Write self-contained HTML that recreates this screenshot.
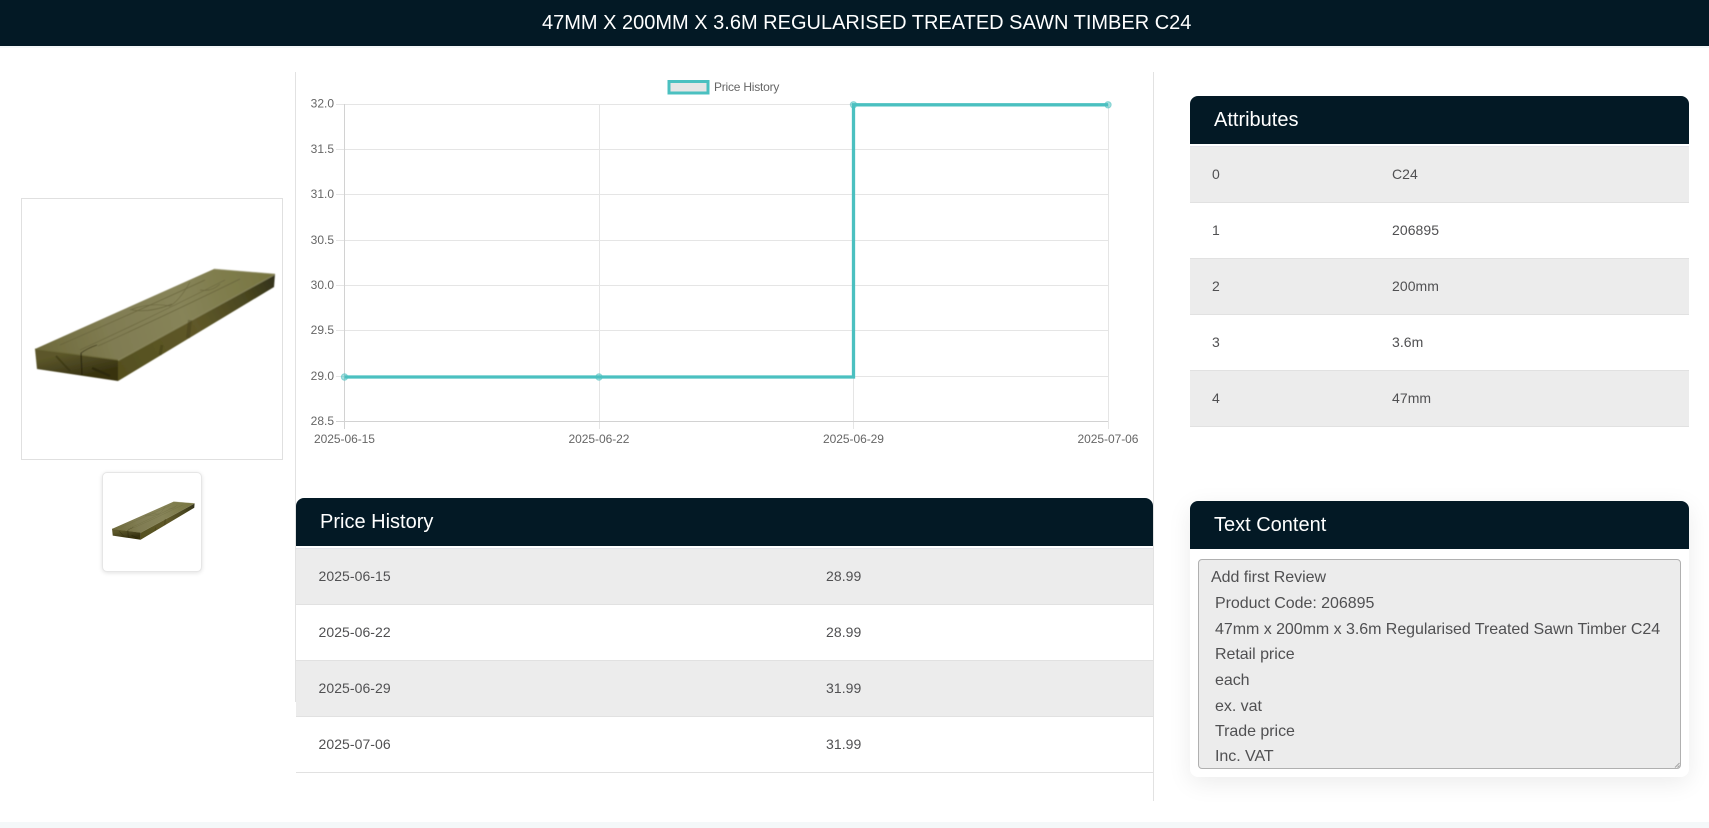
<!DOCTYPE html>
<html lang="en">
<head>
<meta charset="utf-8">
<title>47MM X 200MM X 3.6M REGULARISED TREATED SAWN TIMBER C24</title>
<style>
*{box-sizing:border-box}
html,body{margin:0;padding:0;background:#fff;width:1709px;height:828px;overflow:hidden;font-family:"Liberation Sans",Arial,sans-serif}
.abs{position:absolute}
#top{left:0;top:0;width:1709px;height:46px;background:#031925;color:#fff;font-size:20px;line-height:47px;white-space:nowrap}
#top span{position:absolute;left:542px;top:0}
#topline{left:0;top:46px;width:1709px;height:2px;background:#f5f8f9}
#footer{left:0;top:822px;width:1709px;height:6px;background:#f4f8f9}
.vl{width:1px;background:#e2e2e2}
.head{background:#031925;color:#fff;font-size:20px;border-radius:8px 8px 0 0;height:48px;line-height:49px;padding-left:24px}
.row{position:absolute;height:56.3px;border-bottom:1px solid #e1e1e1;font-size:14px;color:#505052;line-height:55px;background:#fff;letter-spacing:.06px}
.row.g{background:#ececec}
.row span{position:absolute;top:0;white-space:nowrap}
.sep{position:absolute;height:3px;background:#fff;border-bottom:1px solid #e3e3ea}
#imgbox{left:21px;top:198px;width:262px;height:262px;border:1px solid #e0e0e0;background:#fff}
#thumb{left:102px;top:472px;width:100px;height:100px;border:1px solid #e6e6e6;border-radius:5px;background:#fff;box-shadow:0 1px 4px rgba(0,0,0,.12)}
#tcard{left:1190px;top:501px;width:499px;height:276px;background:#fff;border-radius:8px;box-shadow:0 6px 24px rgba(0,0,0,.08)}
#ta{left:1198px;top:559px;width:483px;height:210px;background:#ececec;border:1px solid #b0b0b0;border-radius:4px}
.tl{position:absolute;font-size:16px;color:#505052;white-space:pre;line-height:24px;letter-spacing:-.04px}
</style>
</head>
<body>
<div class="abs" id="top"><span>47MM X 200MM X 3.6M REGULARISED TREATED SAWN TIMBER C24</span></div>
<div class="abs" id="topline"></div>

<div class="abs vl" style="left:295px;top:72px;height:630px"></div>
<div class="abs vl" style="left:1153px;top:72px;height:729px"></div>

<div class="abs" id="imgbox"></div>
<div class="abs" id="thumb"></div>

<svg class="abs" style="left:0;top:0" width="1709" height="828" viewBox="0 0 1709 828">
  <defs>
    <linearGradient id="gt" x1="35" y1="350" x2="276" y2="275" gradientUnits="userSpaceOnUse">
      <stop offset="0" stop-color="#6d693a"/><stop offset=".3" stop-color="#807c52"/><stop offset=".6" stop-color="#878459"/><stop offset="1" stop-color="#77753f"/>
    </linearGradient>
    <linearGradient id="gs" x1="118" y1="370" x2="276" y2="280" gradientUnits="userSpaceOnUse">
      <stop offset="0" stop-color="#55501f"/><stop offset=".5" stop-color="#5f5829"/><stop offset=".8" stop-color="#4a4720"/><stop offset="1" stop-color="#33321a"/>
    </linearGradient>
    <linearGradient id="gf" x1="70" y1="352" x2="76" y2="378" gradientUnits="userSpaceOnUse">
      <stop offset="0" stop-color="#5c5729"/><stop offset=".5" stop-color="#4a4520"/><stop offset="1" stop-color="#37320f"/>
    </linearGradient>
    <filter id="bl" x="-5%" y="-5%" width="110%" height="110%"><feGaussianBlur stdDeviation=".4"/></filter>
    <g id="wood">
      <polygon points="35,349 214,269 275,274 118,360" fill="url(#gt)"/>
      <polygon points="35,349 118,360 118,381 37,369" fill="url(#gf)"/>
      <polygon points="118,360 275,274 274,287 118,381" fill="url(#gs)"/>
      <path d="M214 269 L275 274" stroke="#a9a785" stroke-width=".8" fill="none"/>
      <path d="M118 360.5 L275 274.5" stroke="#8f8c62" stroke-width="1.4" fill="none" opacity=".7"/>
      <path d="M35 349 L118 360" stroke="#6c6838" stroke-width="1" fill="none"/>
      <g fill="none" stroke="#66623a" stroke-width=".7" opacity=".85">
        <path d="M60 345 Q140 310 205 280"/>
        <path d="M130 310 Q150 302 170 306 Q180 300 190 282"/>
        <path d="M80 350 Q150 318 225 280"/>
        <path d="M132 310 Q150 313 172 304"/>
        <path d="M200 290 Q212 292 220 284"/>
        <path d="M98 346 Q160 318 240 279"/>
      </g>
      <path d="M81 353 L82 375" stroke="#25210a" stroke-width="1.1" fill="none"/>
      <path d="M81 353 Q88 348 97 345" stroke="#3f3b1a" stroke-width=".9" fill="none"/>
      <path d="M92 368 L110 376" stroke="#2a2609" stroke-width="2.4" fill="none" opacity=".7"/>
      <path d="M56 356 L70 371" stroke="#33300f" stroke-width="2" fill="none" opacity=".55"/>
      <path d="M162 345 L160 355" stroke="#3d3a16" stroke-width="3" opacity=".4"/>
      <path d="M190 320 L188 338" stroke="#3d3a16" stroke-width="4" opacity=".35"/>
    </g>
  </defs>
  <use href="#wood" filter="url(#bl)"/>
  <use href="#wood" transform="translate(100 410.2) scale(.344 .34)" filter="url(#bl)"/>

  <!-- chart grid -->
  <g stroke="#e5e5e5" stroke-width="1" shape-rendering="crispEdges">
    <line x1="336" x2="1108" y1="104.5" y2="104.5"/>
    <line x1="336" x2="1108" y1="149.5" y2="149.5"/>
    <line x1="336" x2="1108" y1="194.5" y2="194.5"/>
    <line x1="336" x2="1108" y1="240.5" y2="240.5"/>
    <line x1="336" x2="1108" y1="285.5" y2="285.5"/>
    <line x1="336" x2="1108" y1="330.5" y2="330.5"/>
    <line x1="336" x2="1108" y1="376.5" y2="376.5"/>
    <line x1="599.5" x2="599.5" y1="104" y2="429"/>
    <line x1="853.5" x2="853.5" y1="104" y2="429"/>
    <line x1="1108.5" x2="1108.5" y1="104" y2="429"/>
  </g>
  <g stroke="#d2d2d2" stroke-width="1" shape-rendering="crispEdges">
    <line x1="336" x2="1108" y1="421.5" y2="421.5"/>
    <line x1="344.5" x2="344.5" y1="104" y2="429"/>
  </g>
  <!-- legend -->
  <rect x="669" y="81.5" width="39" height="11.5" fill="#e6e6e6" stroke="#4bc0c0" stroke-width="3"/>
  <text x="714" y="91" font-family="Liberation Sans, Arial, sans-serif" font-size="12" fill="#666" letter-spacing="-.22">Price History</text>
  <!-- y labels -->
  <g font-family="Liberation Sans, Arial, sans-serif" font-size="12" fill="#666" text-anchor="end">
    <text x="334" y="107.5">32.0</text>
    <text x="334" y="153">31.5</text>
    <text x="334" y="198">31.0</text>
    <text x="334" y="244">30.5</text>
    <text x="334" y="289">30.0</text>
    <text x="334" y="334">29.5</text>
    <text x="334" y="380">29.0</text>
    <text x="334" y="425">28.5</text>
  </g>
  <g font-family="Liberation Sans, Arial, sans-serif" font-size="12" fill="#666" text-anchor="middle" letter-spacing="-.05">
    <text x="344.5" y="443">2025-06-15</text>
    <text x="599" y="443">2025-06-22</text>
    <text x="853.5" y="443">2025-06-29</text>
    <text x="1108" y="443">2025-07-06</text>
  </g>
  <!-- data -->
  <path d="M344.5 377 H853.5 V104.8 H1108" fill="none" stroke="#4bc0c0" stroke-width="3.3"/>
  <g fill="rgba(75,192,192,.5)" stroke="rgba(75,192,192,.55)" stroke-width="1">
    <circle cx="344.5" cy="377" r="3.2"/>
    <circle cx="599" cy="377" r="3.2"/>
    <circle cx="853.5" cy="104.8" r="3.2"/>
    <circle cx="1108" cy="104.8" r="3.2"/>
  </g>
</svg>

<!-- Price History -->
<div class="abs head" style="left:296px;top:498px;width:857px">Price History</div>
<div class="sep" style="left:296px;top:546px;width:857px"></div>
<div class="row g" style="left:296px;top:549px;width:857px"><span style="left:22.5px">2025-06-15</span><span style="left:530px">28.99</span></div>
<div class="row" style="left:296px;top:605px;width:857px"><span style="left:22.5px">2025-06-22</span><span style="left:530px">28.99</span></div>
<div class="row g" style="left:296px;top:661px;width:857px"><span style="left:22.5px">2025-06-29</span><span style="left:530px">31.99</span></div>
<div class="row" style="left:296px;top:717px;width:857px"><span style="left:22.5px">2025-07-06</span><span style="left:530px">31.99</span></div>

<!-- Attributes -->
<div class="abs head" style="left:1190px;top:96px;width:499px">Attributes</div>
<div class="sep" style="left:1190px;top:144px;width:499px"></div>
<div class="row g" style="left:1190px;top:147px;width:499px"><span style="left:22px">0</span><span style="left:202px">C24</span></div>
<div class="row" style="left:1190px;top:203px;width:499px"><span style="left:22px">1</span><span style="left:202px">206895</span></div>
<div class="row g" style="left:1190px;top:259px;width:499px"><span style="left:22px">2</span><span style="left:202px">200mm</span></div>
<div class="row" style="left:1190px;top:315px;width:499px"><span style="left:22px">3</span><span style="left:202px">3.6m</span></div>
<div class="row g" style="left:1190px;top:371px;width:499px"><span style="left:22px">4</span><span style="left:202px">47mm</span></div>

<!-- Text Content -->
<div class="abs" id="tcard"></div>
<div class="abs head" style="left:1190px;top:501px;width:499px">Text Content</div>
<div class="abs" id="ta"></div>
<div class="tl" style="left:1211px;top:566px">Add first Review</div>
<div class="tl" style="left:1215px;top:592px">Product Code: 206895</div>
<div class="tl" style="left:1215px;top:618px">47mm x 200mm x 3.6m Regularised Treated Sawn Timber C24</div>
<div class="tl" style="left:1215px;top:643px">Retail price</div>
<div class="tl" style="left:1215px;top:669px">each</div>
<div class="tl" style="left:1215px;top:695px">ex. vat</div>
<div class="tl" style="left:1215px;top:720px">Trade price</div>
<div class="tl" style="left:1215px;top:745px;height:23px;overflow:hidden">Inc. VAT</div>
<svg class="abs" style="left:1674px;top:762px" width="6" height="6" viewBox="0 0 6 6"><path d="M1 5.5 L5.5 1 M3.5 5.5 L5.5 3.5" stroke="#a5a5a5" stroke-width="1" fill="none"/></svg>

<div class="abs" id="footer"></div>
</body>
</html>
